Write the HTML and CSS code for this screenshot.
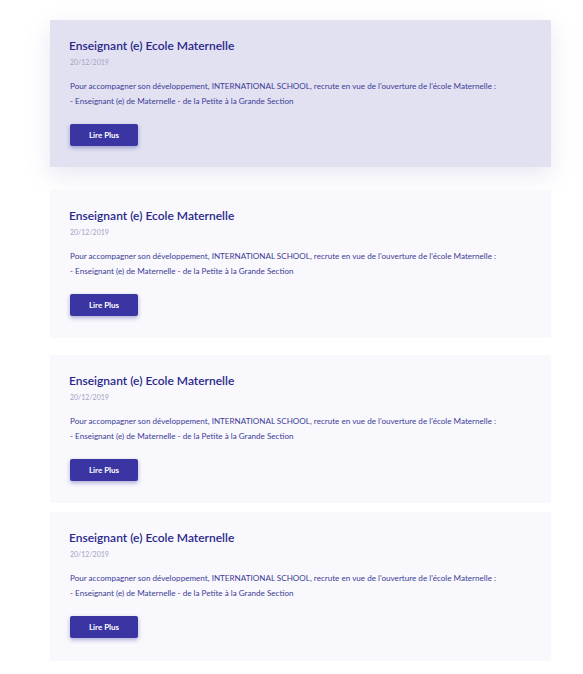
FILE: index.html
```html
<!DOCTYPE html>
<html lang="fr">
<head>
<meta charset="utf-8">
<title>Offres</title>
<link rel="stylesheet" href="styles.css">
</head>
<body>
<main class="list">
  <article class="card card--active card--gap-lg">
    <h2 class="card-title">Enseignant (e) Ecole Maternelle</h2>
    <div class="card-date">20/12/2019</div>
    <p class="card-text">Pour accompagner son développement, INTERNATIONAL SCHOOL, recrute en vue de l'ouverture de l'école Maternelle :<br>- Enseignant (e) de Maternelle - de la Petite à la Grande Section</p>
    <button class="btn">Lire Plus</button>
  </article>
  <article class="card card--gap-md">
    <h2 class="card-title">Enseignant (e) Ecole Maternelle</h2>
    <div class="card-date">20/12/2019</div>
    <p class="card-text">Pour accompagner son développement, INTERNATIONAL SCHOOL, recrute en vue de l'ouverture de l'école Maternelle :<br>- Enseignant (e) de Maternelle - de la Petite à la Grande Section</p>
    <button class="btn">Lire Plus</button>
  </article>
  <article class="card card--gap-sm">
    <h2 class="card-title">Enseignant (e) Ecole Maternelle</h2>
    <div class="card-date">20/12/2019</div>
    <p class="card-text">Pour accompagner son développement, INTERNATIONAL SCHOOL, recrute en vue de l'ouverture de l'école Maternelle :<br>- Enseignant (e) de Maternelle - de la Petite à la Grande Section</p>
    <button class="btn">Lire Plus</button>
  </article>
  <article class="card card--last">
    <h2 class="card-title">Enseignant (e) Ecole Maternelle</h2>
    <div class="card-date">20/12/2019</div>
    <p class="card-text">Pour accompagner son développement, INTERNATIONAL SCHOOL, recrute en vue de l'ouverture de l'école Maternelle :<br>- Enseignant (e) de Maternelle - de la Petite à la Grande Section</p>
    <button class="btn">Lire Plus</button>
  </article>
</main>
</body>
</html>
```

FILE: styles.css
```css
html, body {
  margin: 0;
  padding: 0;
  background: #ffffff;
}
body {
  font-family: Lato, "Open Sans", sans-serif;
}
.list {
  display: flex;
  flex-direction: column;
  width: 501px;
  margin: 20px 0 0 50px;
}
.card {
  background: #f8f8fd;
  padding: 18px 19px 21px 20px;
  display: flex;
  flex-direction: column;
  align-items: flex-start;
  box-sizing: border-box;
  height: 148px;
}
.card--active {
  background: #e1e1f2;
  box-shadow: 0 8px 22px rgba(120, 120, 190, 0.18);
  height: 147px;
}
.card--gap-lg { margin-bottom: 23px; }
.card--gap-md { margin-bottom: 17px; }
.card--gap-sm { margin-bottom: 9px; }
.card--last { height: 149px; }
.card-title {
  margin: 0 0 0 -1px;
  font-size: 12px;
  line-height: 16px;
  font-weight: 600;
  color: #2a288c;
}
.card-date {
  margin-top: 3px;
  font-size: 7px;
  line-height: 10px;
  color: #a3a3c2;
}
.card-text {
  margin: 12px 0 0 0;
  font-size: 8.1px;
  line-height: 15px;
  color: #3d3c96;
}
.btn {
  margin-top: 15px;
  width: 68px;
  height: 22px;
  border: none;
  border-radius: 2px;
  background: #3a35a2;
  color: #ffffff;
  font-family: Lato, "Open Sans", sans-serif;
  font-size: 8px;
  font-weight: 700;
  box-shadow: 0 2px 4px rgba(40, 35, 140, 0.35);
  padding: 0;
}
```
